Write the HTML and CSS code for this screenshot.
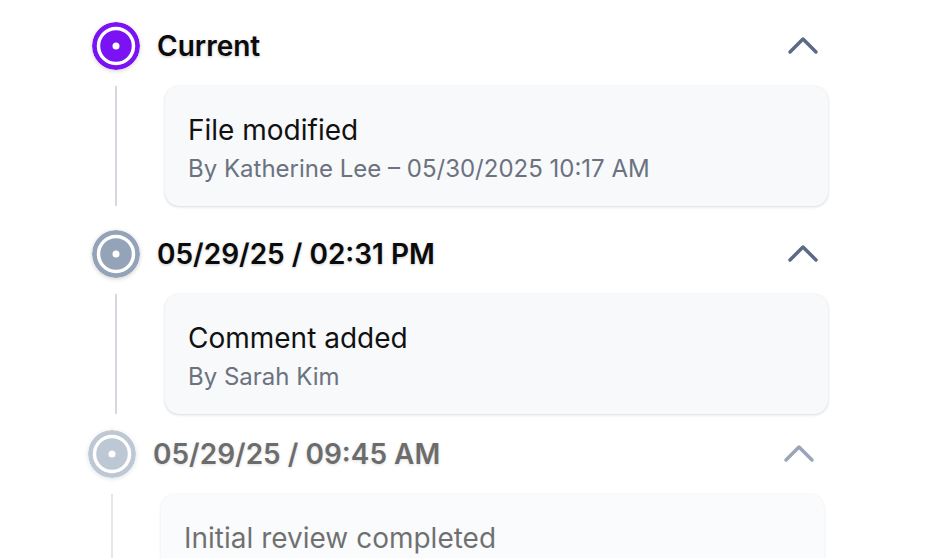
FILE: index.html
```html
<!DOCTYPE html>
<html lang="en">
<head>
<meta charset="utf-8">
<title>Timeline</title>
<link rel="stylesheet" href="styles.css">
</head>
<body>
<div class="timeline">
  <section class="item item-current">
    <div class="head">
      <svg class="dot" width="48" height="48" viewBox="0 0 48 48"><circle cx="24" cy="24" r="24" fill="currentColor"/><circle cx="24" cy="24" r="17.5" fill="none" stroke="#fff" stroke-width="3.5"/><circle cx="24" cy="24" r="3.5" fill="#fff"/></svg>
      <h2 class="title">Current</h2>
      <svg class="chev" width="32" height="32" viewBox="0 0 32 32"><path d="M3 22 L16 9 L29 22" fill="none" stroke="currentColor" stroke-width="3.5" stroke-linecap="round" stroke-linejoin="round"/></svg>
    </div>
    <div class="body">
      <div class="rail"><span class="line"></span></div>
      <div class="card">
        <div class="card-title">File modified</div>
        <div class="card-sub">By Katherine Lee – 05/30/2025 10:17 AM</div>
      </div>
    </div>
  </section>
  <section class="item item-past">
    <div class="head">
      <svg class="dot" width="48" height="48" viewBox="0 0 48 48"><circle cx="24" cy="24" r="24" fill="currentColor"/><circle cx="24" cy="24" r="17.5" fill="none" stroke="#fff" stroke-width="3.5"/><circle cx="24" cy="24" r="3.5" fill="#fff"/></svg>
      <h2 class="title">05/29/25 / 02:31 PM</h2>
      <svg class="chev" width="32" height="32" viewBox="0 0 32 32"><path d="M3 22 L16 9 L29 22" fill="none" stroke="currentColor" stroke-width="3.5" stroke-linecap="round" stroke-linejoin="round"/></svg>
    </div>
    <div class="body">
      <div class="rail"><span class="line"></span></div>
      <div class="card">
        <div class="card-title">Comment added</div>
        <div class="card-sub">By Sarah Kim</div>
      </div>
    </div>
  </section>
  <section class="item item-past item-entering">
    <div class="head">
      <svg class="dot" width="48" height="48" viewBox="0 0 48 48"><circle cx="24" cy="24" r="24" fill="currentColor"/><circle cx="24" cy="24" r="17.5" fill="none" stroke="#fff" stroke-width="3.5"/><circle cx="24" cy="24" r="3.5" fill="#fff"/></svg>
      <h2 class="title">05/29/25 / 09:45 AM</h2>
      <svg class="chev" width="32" height="32" viewBox="0 0 32 32"><path d="M3 22 L16 9 L29 22" fill="none" stroke="currentColor" stroke-width="3.5" stroke-linecap="round" stroke-linejoin="round"/></svg>
    </div>
    <div class="body">
      <div class="rail"><span class="line"></span></div>
      <div class="card">
        <div class="card-title">Initial review completed</div>
        <div class="card-sub">By Katherine Lee</div>
      </div>
    </div>
  </section>
</div>
</body>
</html>
```
FILE: styles.css
```css
html, body {
  margin: 0;
  padding: 0;
  background: #ffffff;
  height: 100%;
  overflow: hidden;
}
body {
  font-family: Inter, "Noto Sans", "Liberation Sans", sans-serif;
  color: #111111;
}
.timeline {
  display: flex;
  flex-direction: column;
  gap: 24px;
  padding: 22px 114px 0 92px;
}
.item {
  display: flex;
  flex-direction: column;
  gap: 16px;
}
.item-entering {
  opacity: 0.6;
  transform: translate(-4px, -8px);
}
.head {
  display: flex;
  align-items: center;
  height: 48px;
  padding-right: 9px;
}
.dot {
  flex: none;
  display: block;
  border-radius: 50%;
  box-shadow: 0 1px 4px rgba(0, 0, 0, 0.18);
}
.item-current .dot { color: #7a12f4; }
.item-past .dot { color: #94a3b8; }
.title {
  flex: 1;
  margin: 0 0 0 17px;
  font-size: 28px;
  font-weight: 600;
  line-height: 34px;
  color: #0b0b0b;
  text-shadow: 0 1px 3px rgba(0, 0, 0, 0.22);
}
.chev {
  flex: none;
  display: block;
  color: #5b6a85;
}
.body {
  display: grid;
  grid-template-columns: 48px 25px 1fr;
}
.rail {
  display: flex;
  justify-content: center;
}
.line {
  display: block;
  width: 2px;
  background: #d4d8df;
}
.card {
  grid-column: 3;
  height: 120px;
  box-sizing: border-box;
  padding: 28px 24px 0 23px;
  background: #f8f9fb;
  border-radius: 14px;
  box-shadow: 0 1px 3px rgba(0, 0, 0, 0.14), 0 0 1px rgba(0, 0, 0, 0.08);
}
.card-title {
  font-size: 28px;
  font-weight: 400;
  line-height: 32px;
  color: #111111;
}
.card-sub {
  margin-top: 8px;
  font-size: 24px;
  line-height: 30px;
  color: #6b7280;
}
```
